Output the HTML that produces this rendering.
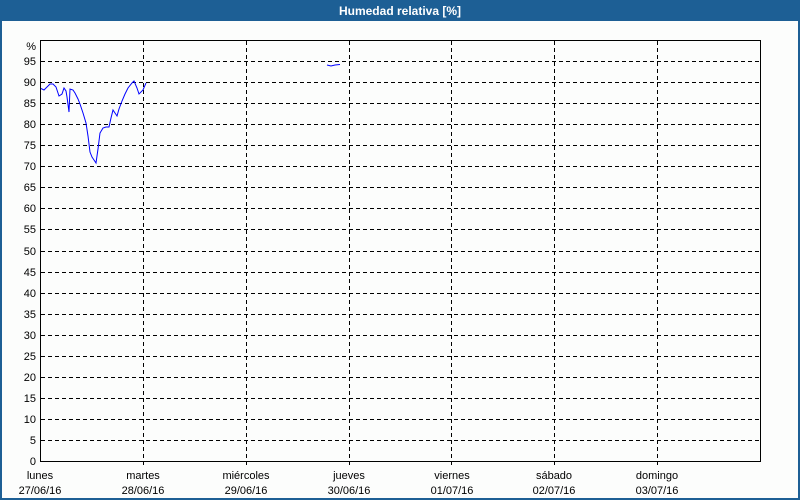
<!DOCTYPE html>
<html><head><style>
html,body{margin:0;padding:0;width:800px;height:500px;overflow:hidden;background:#fcfdfc;font-family:"Liberation Sans",sans-serif}
</style></head><body>
<svg width="800" height="500" xmlns="http://www.w3.org/2000/svg" font-family="Liberation Sans, sans-serif">
<rect x="0" y="0" width="800" height="500" fill="#1d5f95"/>
<rect x="2" y="21" width="796" height="477" fill="#fcfdfc"/>
<text x="400" y="15" fill="#fff" font-size="12" font-weight="bold" text-anchor="middle">Humedad relativa [%]</text>
<g stroke="#000" stroke-width="1" stroke-dasharray="3,3" fill="none">
<path id="h" d=""/>
</g>
<g id="grid"></g>
<rect x="40.5" y="40.5" width="720" height="421" fill="none" stroke="#000"/>
<polyline fill="none" stroke="#0000ff" stroke-width="1" points="41,88.5 44,90 47,87 50,84 53,84 56,87 59,96 62,94 64,88 66,91 67,97 69,112 70,89 73,90 75,93 78,99 80,104 83,113 86,123 88,136 90,152 92,157 94,160 96,163 98,149 100,133 103,128 106,127 109,127 111,118 113,110 115,113 117,116 119,109 122,101 125,94 128,88 132,83 134,81 137,88 139,94 143,90 146,83"/>
<polyline fill="none" stroke="#0000ff" points="327,65 331,66 335,65 340,64.5"/>
<g font-size="11" fill="#000" text-anchor="middle">
<text x="40" y="479">lunes</text><text x="40" y="494">27/06/16</text>
<text x="143" y="479">martes</text><text x="143" y="494">28/06/16</text>
<text x="246" y="479">miércoles</text><text x="246" y="494">29/06/16</text>
<text x="349" y="479">jueves</text><text x="349" y="494">30/06/16</text>
<text x="452" y="479">viernes</text><text x="452" y="494">01/07/16</text>
<text x="554" y="479">sábado</text><text x="554" y="494">02/07/16</text>
<text x="657" y="479">domingo</text><text x="657" y="494">03/07/16</text>
</g>
<g font-size="11" fill="#000" text-anchor="end" id="yl"></g>
<script>
var g=document.getElementById('grid'),yl=document.getElementById('yl'),ns='http://www.w3.org/2000/svg';
for(var v=5;v<=95;v+=5){var y=Math.round(461-v*4.21)+.5;var l=document.createElementNS(ns,'line');l.setAttribute('x1',41);l.setAttribute('x2',760);l.setAttribute('y1',y);l.setAttribute('y2',y);l.setAttribute('stroke','#000');l.setAttribute('stroke-dasharray','4,3');g.appendChild(l);}
for(var v=0;v<=95;v+=5){var y=Math.round(461-v*4.21);var t=document.createElementNS(ns,'text');t.setAttribute('x',36);t.setAttribute('y',y+4);t.textContent=v;yl.appendChild(t);}
var t=document.createElementNS(ns,'text');t.setAttribute('x',36);t.setAttribute('y',50);t.textContent='%';yl.appendChild(t);
for(var i=1;i<7;i++){var x=Math.round(40+i*102.857)+.5;var l=document.createElementNS(ns,'line');l.setAttribute('x1',x);l.setAttribute('x2',x);l.setAttribute('y1',41);l.setAttribute('y2',468);l.setAttribute('stroke','#000');l.setAttribute('stroke-dasharray','4,3');g.appendChild(l);}
</script>
</svg>
</body></html>
